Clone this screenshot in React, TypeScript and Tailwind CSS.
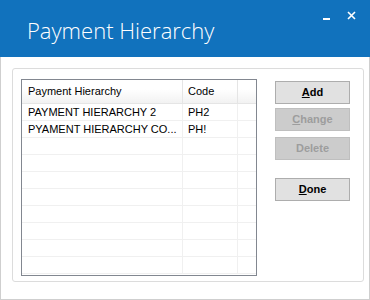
import React from "react";

const rows = [
  { name: "PAYMENT HIERARCHY 2", code: "PH2" },
  { name: "PYAMENT HIERARCHY CO...", code: "PH!" },
  ...Array.from({ length: 8 }, () => ({ name: "", code: "" })),
];

function Btn({ k, rest, disabled }: { k: string; rest: string; disabled?: boolean }) {
  return (
    <button
      className={
        disabled
          ? "flex h-[23px] w-[75px] items-center justify-center border border-[#bfbfbf] bg-[#cccccc] text-[11px] font-bold text-[#9d9d9d]"
          : "flex h-[23px] w-[75px] items-center justify-center border border-[#adadad] bg-[#e1e1e1] text-[11px] font-bold text-black"
      }
      style={{ fontFamily: "'Liberation Sans', Arial, sans-serif" }}
    >
      <span className="underline underline-offset-[1px]">{k}</span>
      {rest}
    </button>
  );
}

export default function App() {
  return (
    <div className="flex h-[300px] w-[370px] flex-col bg-white">
      {/* title bar */}
      <div className="relative h-[57px] shrink-0 bg-[#1172bd]">
        <div
          className="absolute left-[27px] top-[15px] text-[22px] font-light leading-[30px] text-white"
          style={{ fontFamily: "'Open Sans', sans-serif" }}
        >
          Payment Hierarchy
        </div>
        <div className="absolute left-[323px] top-[18px] h-[2px] w-[7px] bg-white" />
        <svg className="absolute left-[347px] top-[11px]" width="9" height="9" viewBox="0 0 9 9">
          <path d="M1 1L8 8M8 1L1 8" stroke="white" strokeWidth="1.6" />
        </svg>
      </div>

      {/* body */}
      <div className="flex-1 border-x border-b border-[#cfcfcf] pl-[11px] pt-[11px]">
        <div className="flex h-[214px] w-[352px] rounded-[3px] border border-[#dcdcdc] pl-[8px] pt-[10px]">
          {/* list view */}
          <div
            className="flex h-[197px] w-[236px] flex-col overflow-hidden border border-[#828790] text-[11px] text-black"
            style={{ fontFamily: "'Liberation Sans', Arial, sans-serif" }}
          >
            <div className="flex h-[24px] shrink-0 border-b border-[#e5e5e5] bg-gradient-to-b from-white from-40% to-[#f2f2f2]">
              <div className="flex w-[161px] items-center border-r border-[#e5e5e5] pl-[6px]">Payment Hierarchy</div>
              <div className="flex w-[55px] items-center border-r border-[#e5e5e5] pl-[5px]">Code</div>
              <div className="flex-1" />
            </div>
            {rows.map((r, i) => (
              <div key={i} className="flex h-[17px] shrink-0 border-b border-[#f0f0f0]">
                <div className="flex w-[161px] items-center border-r border-[#f0f0f0] pl-[6px]">{r.name}</div>
                <div className="flex w-[55px] items-center border-r border-[#f0f0f0] pl-[5px]">{r.code}</div>
                <div className="flex-1" />
              </div>
            ))}
          </div>

          {/* buttons */}
          <div className="ml-[18px] flex flex-col pt-[2px]">
            <Btn k="A" rest="dd" />
            <div className="mt-[4px]">
              <Btn k="C" rest="hange" disabled />
            </div>
            <div className="mt-[6px]">
              <Btn k="" rest="Delete" disabled />
            </div>
            <div className="mt-[18px]">
              <Btn k="D" rest="one" />
            </div>
          </div>
        </div>
      </div>
    </div>
  );
}
